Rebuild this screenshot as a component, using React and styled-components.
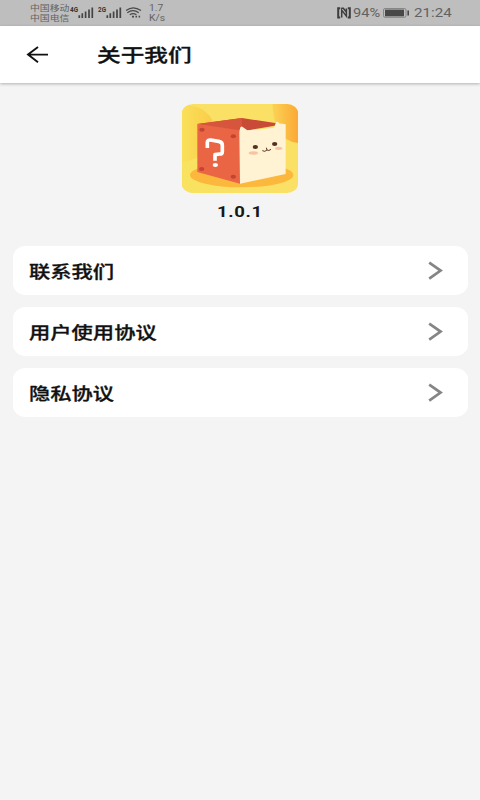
import React from 'react';
import styled, { createGlobalStyle } from 'styled-components';

const GlobalStyle = createGlobalStyle`
    * {
        box-sizing: border-box;
    }
    body {
        margin: 0;
        background-color: #f4f4f4;
        font-family: Roboto, 'Noto Sans CJK SC', sans-serif;
    }
    svg {
        display: block;
        flex: none;
    }
`;

const Page = styled.div`
    height: 800px;
    overflow: hidden;
    background-color: #f4f4f4;
`;

const StatusBar = styled.div`
    display: flex;
    align-items: center;
    justify-content: space-between;
    height: 26px;
    padding: 0 28px 0 30px;
    background-color: #bebebe;
    color: #626262;
`;

const StatusGroup = styled.div`
    display: flex;
    align-items: center;
    height: 100%;
`;

const Wide = styled.span`
    display: block;
    white-space: nowrap;
    transform: scaleX(${(props) => props.$stretch || 1.28});
    transform-origin: left center;
`;

const Carriers = styled.div`
    width: 40px;
    padding-top: 2px;
    font-size: 7.7px;
    line-height: 10.5px;
`;

const Speed = styled.div`
    width: 20px;
    margin-left: 7px;
    padding-top: 1px;
    font-size: 8.6px;
    line-height: 9.5px;
`;

const Battery = styled.div`
    width: 30px;
    margin-left: 2px;
    font-size: 12.2px;
    line-height: 26px;
`;

const Clock = styled.div`
    width: 38px;
    margin-left: 4px;
    font-size: 12.2px;
    line-height: 26px;
`;

const Header = styled.header`
    display: flex;
    align-items: center;
    height: 57px;
    padding-left: 26px;
    background-color: #fff;
    box-shadow: 0 1px 3px rgba(0, 0, 0, 0.28);
`;

const Title = styled.h1`
    margin: 2px 0 0 47.5px;
    font-size: 18.5px;
    font-weight: 500;
    line-height: 26px;
    color: #111;
    -webkit-text-stroke: 0.3px #111;
`;

const Brand = styled.div`
    display: flex;
    flex-direction: column;
    align-items: center;
    padding-top: 21px;
`;

const Version = styled.p`
    width: 46px;
    margin: 9px 0 0;
    font-size: 14px;
    font-weight: 700;
    line-height: 20px;
    letter-spacing: 0.5px;
    color: #171717;
`;

const List = styled.ul`
    display: flex;
    flex-direction: column;
    gap: 12px;
    margin: 24px 12.5px 0;
    padding: 0;
    list-style: none;
`;

const Item = styled.li`
    display: flex;
    align-items: center;
    justify-content: space-between;
    height: 49px;
    padding: 0 25px 0 16.5px;
    border-radius: 13px / 11px;
    background-color: #fff;
    font-size: 16.5px;
    font-weight: 500;
    color: #111;
    -webkit-text-stroke: 0.3px #111;
`;

const Signal = ({ label }) => (
    <svg width='28' height='26' viewBox='0 0 28 26'>
        <text x='0' y='12' fontSize='6.3' fontWeight='700' fill='#333' textLength='8' lengthAdjust='spacingAndGlyphs'>
            {label}
        </text>
        <path d='M9.3 15.2v2.7M12.3 13.2v4.7M15.6 11.4v6.5M19 9.6v8.3M22.3 7.6v10.3' stroke='#444' strokeWidth='1.7' />
    </svg>
);

const Wifi = () => (
    <svg width='16' height='26' viewBox='0 0 16 26' fill='none' stroke='#484848' strokeWidth='1.2'>
        <path d='M0 10.6Q7 5 15 10.6M1.3 12.7Q7 8.6 12.7 12.7M3.8 14.8Q7 12.5 10.4 14.8' />
        <path d='M6 16.6h2M9.5 16.6h1.5M12.6 16.6h1.5' strokeWidth='1.6' />
    </svg>
);

const Nfc = () => (
    <svg width='14' height='12' viewBox='0 0 14 12' fill='none' stroke='#3d3d3d'>
        <path d='M3.2 1.2H1.2v9.4h2M10.8 1.2h2v9.4h-2' strokeWidth='2' />
        <path d='M4.7 10.5V3.1l4.7 6V1.4M4.3 1.3h2l3.2 4' strokeWidth='1.5' />
    </svg>
);

const BatteryIcon = () => (
    <svg width='27' height='10' viewBox='0 0 27 10'>
        <rect x='.5' y='.5' width='22.5' height='8.8' rx='1.5' fill='none' stroke='#777' strokeWidth='.8' />
        <rect x='2' y='1.6' width='19' height='6.7' fill='#484848' />
        <path d='M25.2 2.5v5' stroke='#484848' strokeWidth='1.6' />
    </svg>
);

const BackArrow = () => (
    <svg width='23' height='18' viewBox='0 0 23 18' fill='none' stroke='#111' strokeWidth='1.9'>
        <path d='M22 8.6H2M12 1L2 8.6L12 16.2' />
    </svg>
);

const Chevron = () => (
    <svg width='15' height='20' viewBox='0 0 15 20' fill='none' stroke='#858585' strokeWidth='2.7'>
        <path d='M1.2 1.6L12.6 9.6L1.2 17.6' />
    </svg>
);

const Logo = () => (
    <svg width='116' height='89' viewBox='36 27 348 267' preserveAspectRatio='none'>
        <defs>
            <clipPath id='tile'>
                <rect x='36' y='27' width='348' height='267' rx='34' ry='27' />
            </clipPath>
            <linearGradient id='corner' x1='0' x2='1'>
                <stop offset='0' stopColor='#fbd455' />
                <stop offset='1' stopColor='#fca835' />
            </linearGradient>
            <linearGradient id='disc' x1='0' x2='1'>
                <stop offset='0' stopColor='#fae05a' />
                <stop offset='1' stopColor='#fbcb48' />
            </linearGradient>
        </defs>
        <g clipPath='url(#tile)'>
            <path d='M36 27h348v267H36z' fill='#fae064' />
            <path d='M36 30Q103 27 131 82V205H36z' fill='url(#disc)' />
            <path d='M36 200Q70 200 131 160V294H36z' fill='#fae261' />
            <path d='M307 27h77v117q-42-5-60-39Q309 69 307 27z' fill='url(#corner)' />
            <ellipse cx='215' cy='240' rx='155' ry='37' fill='#fbb83d' />
            <path d='M82 87L216 69L340 88L210 110z' fill='#c94a36' />
            <path d='M216 69V103L210 110L82 87z' fill='#d8553d' />
            <path d='M82 87L210 106V266L82 231z' fill='#ea6544' />
            <path d='M208 112L209 104Q211 92 217 95L232 106L312 98L318 82Q322 77 328 85L347 88V237L210 266z' fill='#fff3d4' />
            <g fill='#c44434'>
                <ellipse cx='96' cy='104' rx='8' ry='6' />
                <ellipse cx='190' cy='124' rx='8' ry='6' />
                <ellipse cx='95' cy='222' rx='8' ry='6' />
                <ellipse cx='190' cy='245' rx='8' ry='6' />
            </g>
            <path
                d='M112 159V142Q112 134 122 135L146 139Q157 141 157 150V170Q157 177 149 177L135 179V197'
                fill='none'
                stroke='#fff'
                strokeWidth='11'
                strokeLinejoin='round'
            />
            <ellipse cx='136' cy='210' rx='8' ry='6' fill='#fff' />
            <ellipse cx='256' cy='156' rx='8' ry='6' fill='#54301f' />
            <ellipse cx='314' cy='147' rx='8' ry='6' fill='#54301f' />
            <ellipse cx='250' cy='174' rx='14' ry='5' fill='#f9c2a1' />
            <ellipse cx='326' cy='160' rx='11' ry='5' fill='#f9c2a1' />
            <path d='M277 167Q285 172 291 165Q296 169 303 163M289 158l2 7' fill='none' stroke='#5d3829' strokeWidth='3' />
        </g>
    </svg>
);

const items = ['联系我们', '用户使用协议', '隐私协议'];

const App = () => {
    return (
        <Page>
            <GlobalStyle />
            <StatusBar>
                <StatusGroup>
                    <Carriers>
                        <Wide>中国移动</Wide>
                        <Wide>中国电信</Wide>
                    </Carriers>
                    <Signal label='4G' />
                    <Signal label='2G' />
                    <Wifi />
                    <Speed>
                        <Wide $stretch={1.2}>1.7</Wide>
                        <Wide $stretch={1.2}>K/s</Wide>
                    </Speed>
                </StatusGroup>
                <StatusGroup>
                    <Nfc />
                    <Battery>
                        <Wide $stretch={1.2}>94%</Wide>
                    </Battery>
                    <BatteryIcon />
                    <Clock>
                        <Wide $stretch={1.24}>21:24</Wide>
                    </Clock>
                </StatusGroup>
            </StatusBar>
            <Header>
                <BackArrow />
                <Title>
                    <Wide>关于我们</Wide>
                </Title>
            </Header>
            <Brand>
                <Logo />
                <Version>
                    <Wide $stretch={1.32}>1.0.1</Wide>
                </Version>
            </Brand>
            <List>
                {items.map((item) => (
                    <Item key={item}>
                        <Wide $stretch={1.29}>{item}</Wide>
                        <Chevron />
                    </Item>
                ))}
            </List>
        </Page>
    );
};

export default App;
